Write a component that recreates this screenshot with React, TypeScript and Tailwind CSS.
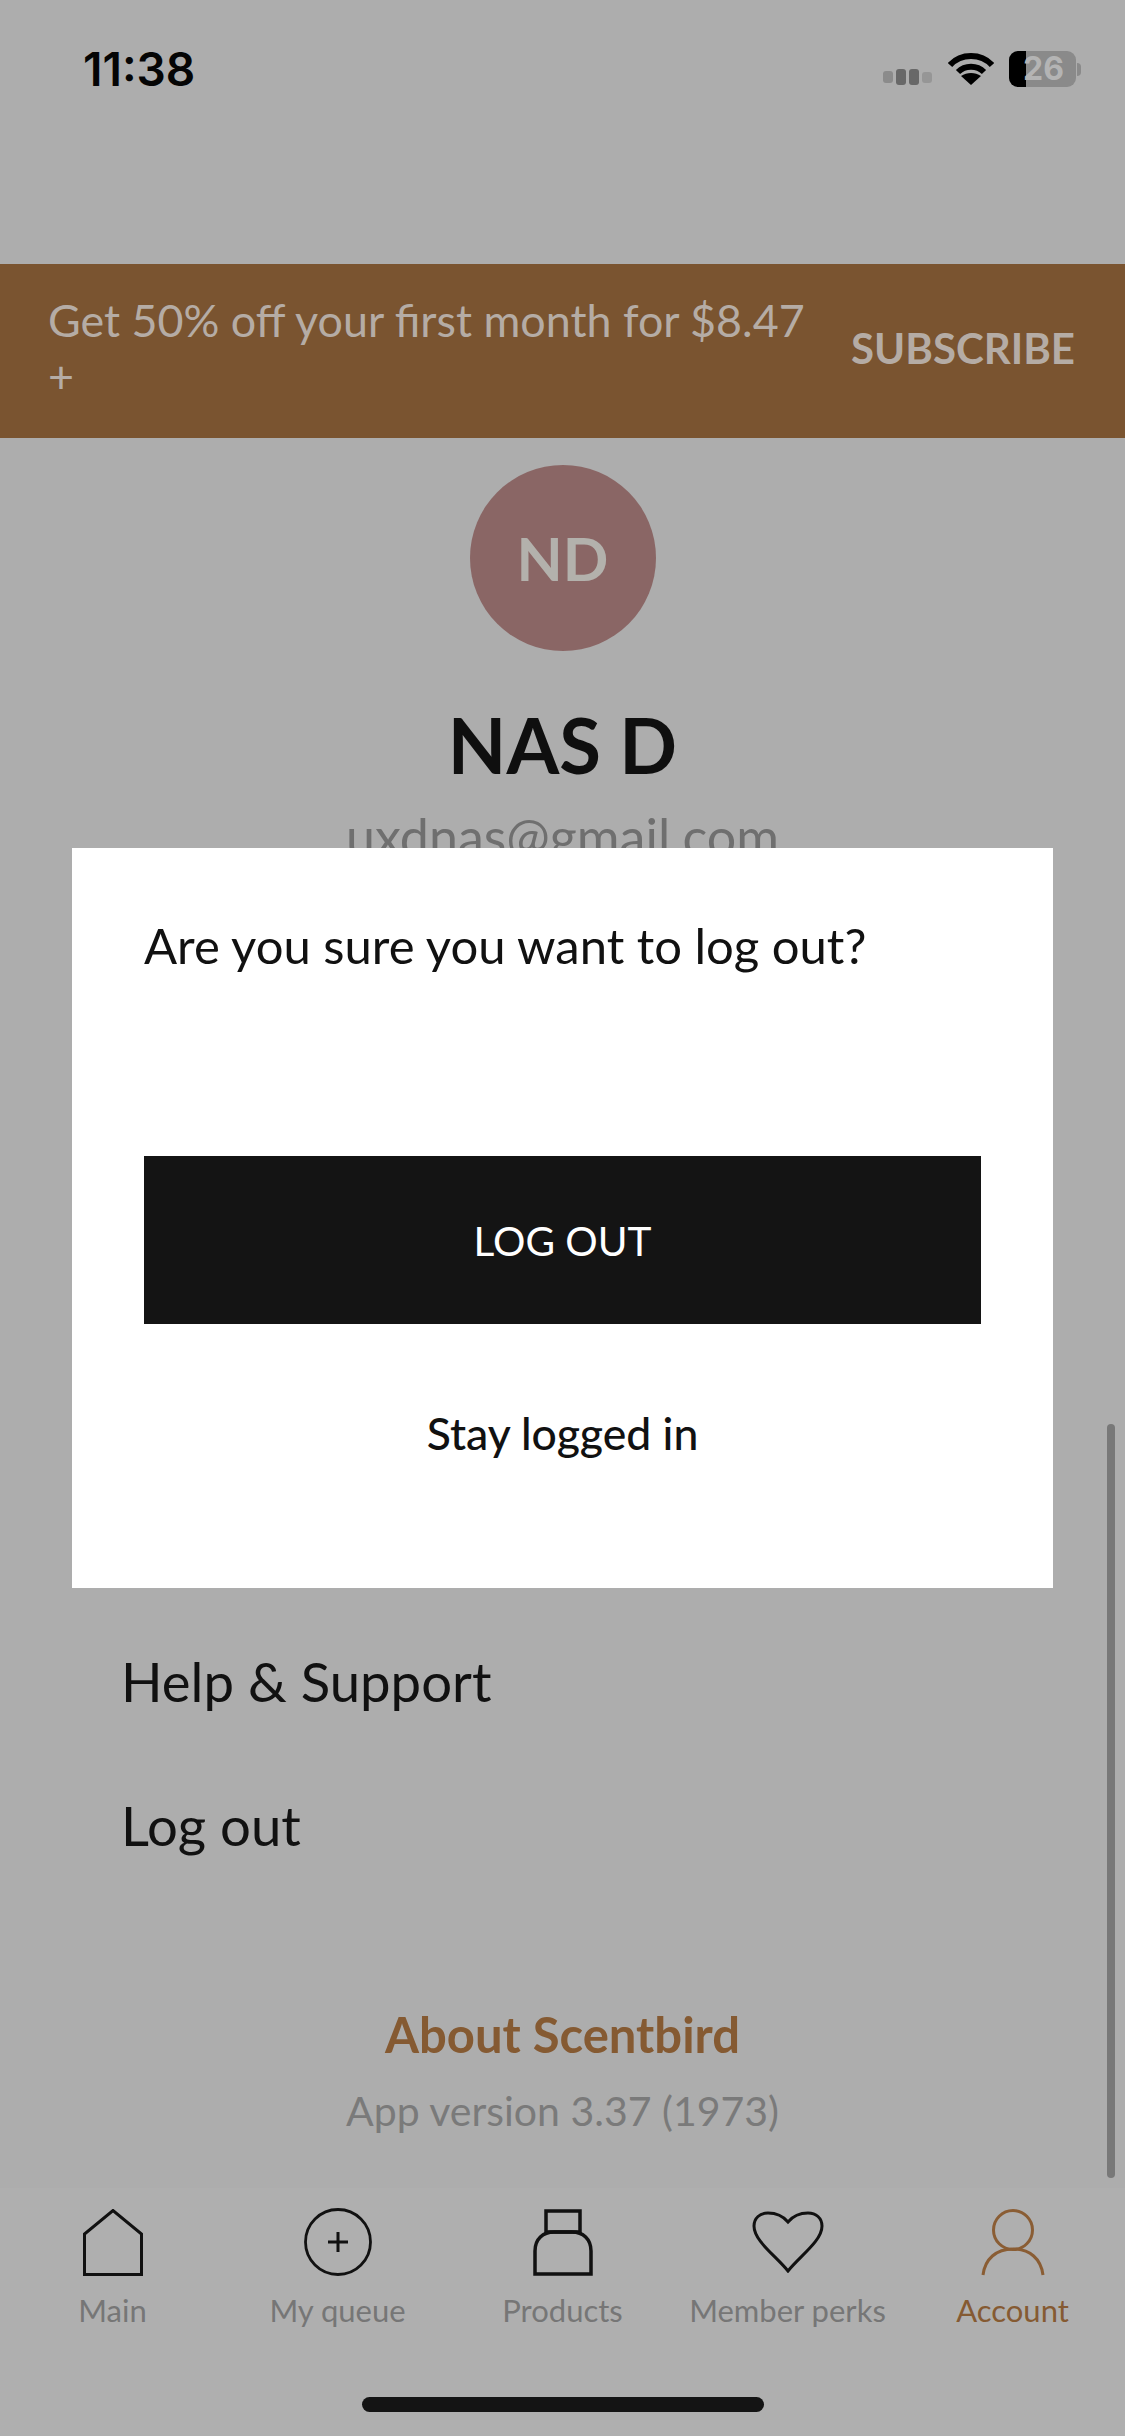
const TABS = [
  { label: "Main", icon: <svg width="60" height="67" viewBox="0 0 60 67" fill="none" stroke="#111" strokeWidth="3"><path d="M1.500 65.500V25L30 1.500 58.500 25v40.500z" /></svg> },
  { label: "My queue", icon: <svg width="68" height="70" viewBox="0 0 68 70" fill="none" stroke="#111" strokeWidth="2.800"><circle cx="34" cy="35" r="32.500" /><path d="M34 25v20M24 35h20" strokeWidth="3" /></svg> },
  { label: "Products", icon: <svg width="60" height="67" viewBox="0 0 60 67" fill="none" stroke="#111" strokeWidth="3.500"><path d="M13 2h34v21H13z" /><path d="M2 65V42C2 30 10 23 21 23h18c11 0 19 7 19 19v23z" /></svg> },
  { label: "Member perks", icon: <svg width="72" height="62" viewBox="0 0 72 62" fill="none" stroke="#111" strokeWidth="3"><path d="M36 60C24 45 2 30 2 15 2 7 8 2 16 2c8 0 15 3 20 9C41 5 48 2 56 2c8 0 14 5 14 13 0 15-22 30-34 45z" /></svg> },
  { label: "Account", active: true, icon: <svg width="64" height="67" viewBox="0 0 64 67" fill="none" stroke="#8a5d34" strokeWidth="3"><circle cx="32" cy="21" r="19.500" /><path d="M2 66C4 50 15 40 32 40s28 10 30 26" /></svg> },
];

export default function App() {
  return (
    <div className="relative w-[1125px] h-[2436px] overflow-hidden bg-[#adadad] flex flex-col font-['Lato','Liberation_Sans',sans-serif] text-[#111111]">
      <div className="h-[264px] shrink-0 pt-[46px] pl-[83px] pr-[44px] flex items-start justify-between">
        <span className="font-['Inter',sans-serif] font-semibold text-[46px] leading-[46px] text-[#050505]">11:38</span>
        <div className="flex items-start">
          <div className="flex items-center gap-[3px] mt-[23px] mr-[16px]">
            <span className="w-[10px] h-[12px] rounded-[3px] bg-[#8b8b8b]" />
            <span className="w-[10px] h-[16px] rounded-[3px] bg-[#686868]" />
            <span className="w-[10px] h-[16px] rounded-[3px] bg-[#686868]" />
            <span className="w-[10px] h-[11px] rounded-[3px] bg-[#969696]" />
          </div>
          <svg width="46" height="34" viewBox="0 0 46 34" className="mt-[6px] mr-[15px]" fill="none"><path d="M2 13C13 1 33 1 44 13" stroke="#000" strokeWidth="6" /><path d="M10 20c7-7 19-7 26 0" stroke="#000" strokeWidth="6" /><path d="M23 33l-10-9c6-4 14-4 20 0z" fill="#000" /></svg>
          <div className="relative mt-[5px] flex items-center justify-center h-[36px] w-[67px] rounded-[9px] bg-[#8a8a8a]">
            <span className="absolute left-0 top-0 w-[17px] h-full rounded-l-[9px] bg-black" />
            <span className="relative pl-[2px] font-['Inter',sans-serif] font-bold text-[32px] leading-[36px] text-[#b4b4b4]">26</span>
          </div>
          <span className="mt-[17px] ml-[1px] h-[13px] w-[4px] rounded-r-[4px] bg-[#8a8a8a]" />
        </div>
      </div>

      <div className="h-[174px] shrink-0 bg-[#7a5430] pl-[48px] pr-[50px] flex items-center justify-between text-[#b5aca5]">
        <div className="w-[780px] text-[44.8px] leading-[56px] mt-[-6px]">Get 50% off your first month for $8.47<br />+</div>
        <span className="font-bold text-[42px] leading-[50px] mt-[-6px]">SUBSCRIBE</span>
      </div>

      <main className="flex-1 flex flex-col">
        <div className="flex flex-col items-center">
          <div className="mt-[27px] w-[186px] h-[186px] rounded-full bg-[#8a6665] flex items-center justify-center text-[60px] font-bold text-[#b3b1ac]">ND</div>
          <h1 className="mt-[49px] text-[76px] leading-[90px] font-bold text-[#0f0f0f]">NAS D</h1>
          <p className="mt-[16px] text-[52px] leading-[60px] text-[#6f6f6f]">uxdnas@gmail.com</p>
        </div>
        <ul className="mt-[785px] pl-[121px] flex flex-col gap-[84px] text-[54.5px] leading-[60px]">
          <li>Help &amp; Support</li>
          <li>Log out</li>
        </ul>
        <div className="mt-[149px] flex flex-col items-center gap-[17px]">
          <span className="text-[49px] leading-[60px] font-bold text-[#855a32]">About Scentbird</span>
          <span className="text-[41px] leading-[60px] text-[#7a7a7a]">App version 3.37 (1973)</span>
        </div>
      </main>

      <nav className="h-[248px] shrink-0 bg-[#afafaf] pt-[16px]">
        <div className="grid grid-cols-5">
          {TABS.map((t) => (
            <div key={t.label} className="flex flex-col items-center">
              <div className="h-[76px] flex items-center justify-center">{t.icon}</div>
              <span className={`mt-[10px] text-[31px] leading-[40px] ${t.active ? "text-[#855a32]" : "text-[#767676]"}`}>{t.label}</span>
            </div>
          ))}
        </div>
        <div className="mx-auto mt-[67px] h-[15px] w-[402px] rounded-full bg-[#141414]" />
      </nav>

      <div className="absolute left-[1107px] top-[1424px] h-[754px] w-[8px] rounded-full bg-[#787878]" />

      <div role="dialog" className="absolute left-[72px] top-[848px] w-[981px] h-[740px] bg-white pt-[67px] px-[72px]">
        <p className="text-[49px] leading-[60px] text-[#111111]">Are you sure you want to log out?</p>
        <button className="mt-[181px] w-full h-[168px] bg-[#141414] text-white text-[40.5px] leading-[60px] pt-[2px]">LOG OUT</button>
        <p className="mt-[79px] text-center text-[44.5px] leading-[60px] font-medium text-[#111111]">Stay logged in</p>
      </div>
    </div>
  );
}
